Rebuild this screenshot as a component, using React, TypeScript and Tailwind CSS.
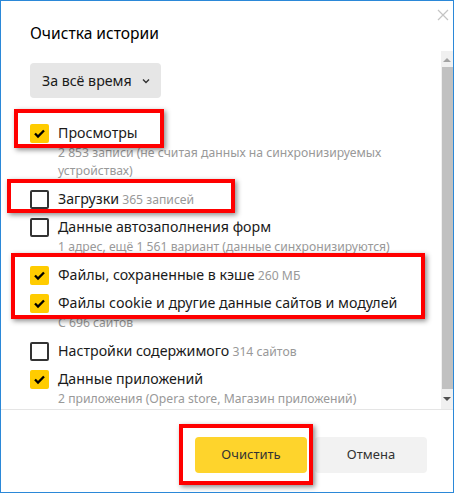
import React from "react";

const font = { fontFamily: '"Noto Sans", "Open Sans", sans-serif' };

function Check({ checked }: { checked: boolean }) {
  if (checked) {
    return (
      <div className="w-[19px] h-[19px] rounded-[2px] bg-[#ffcc00] flex items-center justify-center shrink-0">
        <svg width="19" height="19" viewBox="0 0 19 19">
          <path d="M5 9.5 L8 12.5 L14 6.5" fill="none" stroke="#000" strokeWidth="2.3" />
        </svg>
      </div>
    );
  }
  return <div className="w-[19px] h-[19px] rounded-[2px] border-2 border-[#333] bg-white shrink-0" />;
}

type Item = { label: string; inline?: string; sub?: string[]; checked: boolean };

const items: Item[] = [
  { label: "Просмотры", checked: true, sub: ["2 853 записи (не считая данных на синхронизируемых", "устройствах)"] },
  { label: "Загрузки", inline: "365 записей", checked: false },
  { label: "Данные автозаполнения форм", checked: false, sub: ["1 адрес, ещё 1 561 вариант (данные синхронизируются)"] },
  { label: "Файлы, сохраненные в кэше", inline: "260 МБ", checked: true },
  { label: "Файлы cookie и другие данные сайтов и модулей", checked: true, sub: ["С 696 сайтов"] },
  { label: "Настройки содержимого", inline: "314 сайтов", checked: false },
  { label: "Данные приложений", checked: true, sub: ["2 приложения (Opera store, Магазин приложений)"] },
];

function Row({ item }: { item: Item }) {
  return (
    <div className="flex flex-col">
      <div className="h-[28px] flex items-center gap-[9px]">
        <Check checked={item.checked} />
        <span className="text-[14.2px] text-[#1a1a1a] whitespace-nowrap">
          {item.label}
          {item.inline && <span className="text-[12.2px] text-[#999]"> {item.inline}</span>}
        </span>
      </div>
      {item.sub && (
        <div className="-mt-[3px] mb-[5px] pl-[28px] text-[12.2px] leading-[18px] text-[#999]">
          {item.sub.map((s, i) => (
            <div key={i} className="whitespace-nowrap">{s}</div>
          ))}
        </div>
      )}
    </div>
  );
}

function RedBox({ cls }: { cls: string }) {
  return (
    <div
      className={`absolute border-[4px] border-[#ff0000] ${cls}`}
      style={{ boxShadow: "2px 2px 5px rgba(0,0,0,0.45)" }}
    />
  );
}

export default function App() {
  return (
    <div className="relative w-[455px] h-[494px] bg-white overflow-hidden" style={font}>
      <div className="w-[454px] h-[493px] border border-[#2b88d8] flex flex-col bg-white">
        <div className="relative h-[50px] pl-[29px] pt-[20px] shrink-0">
          <div className="text-[15.6px] leading-[24px] text-black">Очистка истории</div>
          <svg className="absolute left-[436px] top-[8px]" width="12" height="12" viewBox="0 0 12 12">
            <path d="M1 1 L11 11 M11 1 L1 11" stroke="#c4c4c4" strokeWidth="1.2" />
          </svg>
        </div>
        <div className="h-[358px] flex shrink-0">
          <div className="flex-1 overflow-hidden pt-[12px] pl-[29px]">
            <div className="w-[131px] h-[35px] rounded-[4px] bg-[#e6e6e6] flex items-center pl-[12px] gap-[10px]">
              <span className="text-[14.2px] text-[#1a1a1a]">За всё время</span>
              <svg width="8" height="6" viewBox="0 0 8 6">
                <path d="M1 1.5 L4 4.5 L7 1.5" fill="none" stroke="#333" strokeWidth="1.4" />
              </svg>
            </div>
            <div className="mt-[21px] flex flex-col">
              {items.map((it, i) => (
                <Row key={i} item={it} />
              ))}
            </div>
          </div>
          <div className="w-[12px] bg-[#f0f0f0] flex flex-col">
            <div className="h-[16px] flex items-center justify-center">
              <svg width="8" height="5" viewBox="0 0 8 5">
                <path d="M0 5 L4 1 L8 5 Z" fill="#a3a3a3" />
              </svg>
            </div>
            <div className="h-[322px] ml-[1px] bg-[#c1c1c1]" />
            <div className="h-[20px] flex items-center justify-center">
              <svg width="8" height="5" viewBox="0 0 8 5">
                <path d="M0 0 L4 4 L8 0 Z" fill="#505050" />
              </svg>
            </div>
          </div>
        </div>
        <div className="flex-1 border-t border-[#e5e5e5] flex justify-end items-start pt-[27px] pr-[26px] gap-[8px]">
          <div className="w-[112px] h-[36px] rounded-[4px] bg-[#fed42c] flex items-center justify-center text-[13px] text-[#333]">
            Очистить
          </div>
          <div className="w-[112px] h-[36px] rounded-[4px] bg-[#f2f2f2] flex items-center justify-center text-[13px] text-[#333]">
            Отмена
          </div>
        </div>
      </div>
      <RedBox cls="left-[14px] top-[109px] w-[150px] h-[39px]" />
      <RedBox cls="left-[7px] top-[179px] w-[228px] h-[34px]" />
      <RedBox cls="left-[11px] top-[253px] w-[414px] h-[66px]" />
      <RedBox cls="left-[179px] top-[424px] w-[134px] h-[61px]" />
    </div>
  );
}
